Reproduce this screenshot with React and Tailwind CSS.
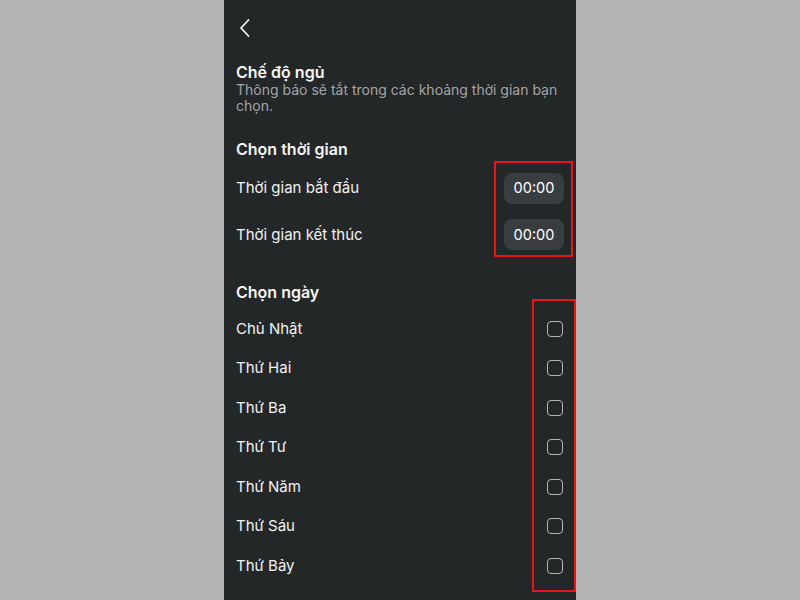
import React from "react";

const days = ["Chủ Nhật", "Thứ Hai", "Thứ Ba", "Thứ Tư", "Thứ Năm", "Thứ Sáu", "Thứ Bảy"];

function TimeRow({ label }) {
  return (
    <div className="flex items-center justify-between h-[46.5px]">
      <span className="text-[15px] text-[#f2f2f2]">{label}</span>
      <div className="w-[60px] h-[31px] rounded-[8px] bg-[#3a3d3f] flex items-center justify-center text-[14.5px] text-white">
        00:00
      </div>
    </div>
  );
}

export default function App() {
  return (
    <div
      className="w-[800px] h-[600px] bg-[#b3b3b3] flex justify-center overflow-hidden"
      style={{ fontFamily: "Inter, 'Noto Sans', sans-serif" }}
    >
      <div className="relative w-[352px] h-[600px] bg-[#242728] text-white">
        <div className="h-[50px] flex items-start pl-[14px] pt-[18px]">
          <svg width="14" height="20" viewBox="0 0 14 20" fill="none">
            <path d="M10.5 2 L3 10 L10.5 18" stroke="#f2f2f2" strokeWidth="1.8" strokeLinecap="round" strokeLinejoin="round" />
          </svg>
        </div>
        <div className="pl-3 pr-3 pt-[12px]">
          <div className="text-[16px] font-semibold leading-[20px] text-[#f5f5f5]">Chế độ ngủ</div>
          <div className="text-[14px] leading-[16px] text-[#a3a5a6]">
            Thông báo sẽ tắt trong các khoảng thời gian bạn chọn.
          </div>
          <div className="mt-[25px] text-[16px] font-semibold leading-[20px] text-[#f5f5f5]">Chọn thời gian</div>
          <div className="mt-[6px]">
            <TimeRow label="Thời gian bắt đầu" />
            <TimeRow label="Thời gian kết thúc" />
          </div>
          <div className="mt-[24px] text-[16px] font-semibold leading-[20px] text-[#f5f5f5]">Chọn ngày</div>
          <div className="mt-[7px] pr-[1px]">
            {days.map((d) => (
              <div key={d} className="flex items-center justify-between h-[39.5px]">
                <span className="text-[15px] text-[#f2f2f2]">{d}</span>
                <div className="w-4 h-4 rounded-[4px] border-[1.5px] border-[#b5b7b8]" />
              </div>
            ))}
          </div>
        </div>
        <div className="absolute left-[270px] top-[161px] w-[79px] h-[96px] border-[2.5px] border-[#e8141b]" />
        <div className="absolute left-[308px] top-[299px] w-[44px] h-[293px] border-[2.5px] border-[#e8141b]" />
      </div>
    </div>
  );
}
